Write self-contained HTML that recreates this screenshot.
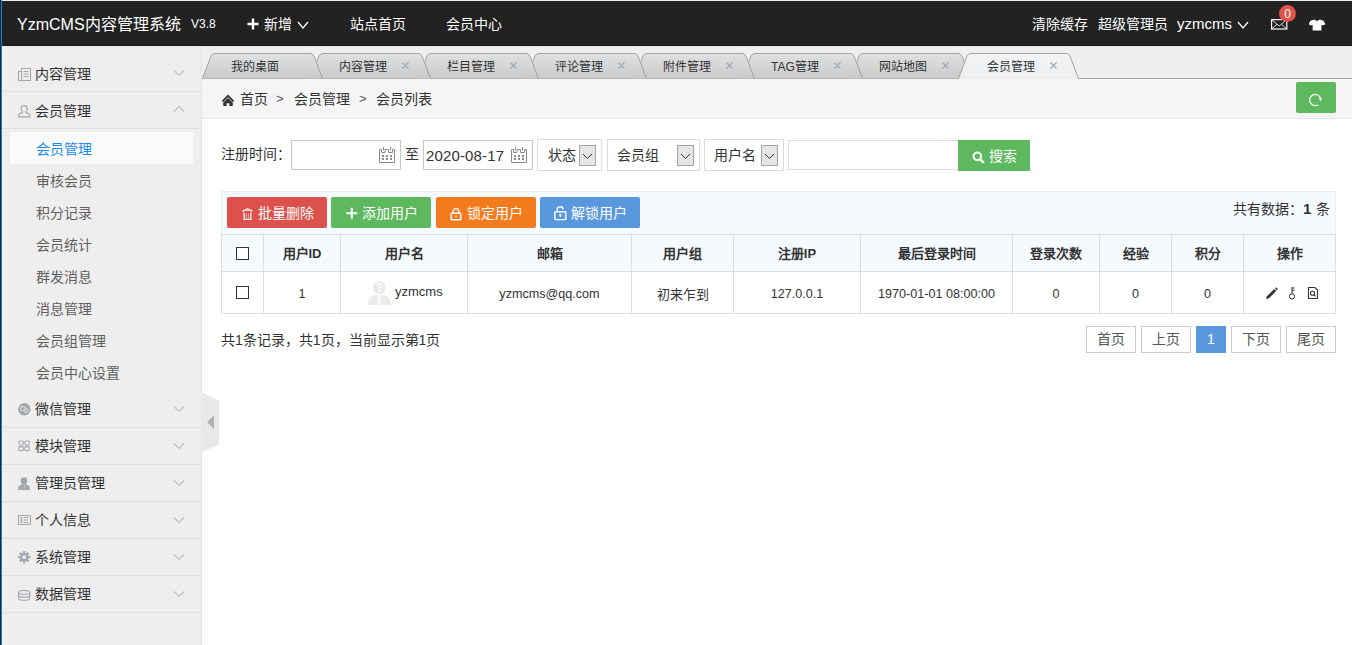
<!DOCTYPE html><html lang="zh-CN"><head><meta charset="utf-8"><title>会员列表 - YzmCMS</title><style>
*{margin:0;padding:0;box-sizing:border-box;}
html,body{width:1352px;height:645px;overflow:hidden;background:#fff;}
body{font-family:"Liberation Sans",sans-serif;font-size:14px;color:#333;position:relative;}
.a{position:absolute;white-space:nowrap;}
#frameL{left:0;top:0;width:1px;height:645px;background:#2a2523;}
#frameB{left:1px;top:0;width:1px;height:645px;background:#1a80d8;}
#header{left:2px;top:0;width:1350px;height:46px;background:#222;border-top:1px solid #eeeeee;border-bottom:1px solid #151515;}
.ht{position:absolute;color:#fff;white-space:nowrap;line-height:20px;font-size:14px;}
#sidebar{left:2px;top:46px;width:200px;height:599px;background:#eee;border-right:1px solid #e2e2e2;}
.sh{position:absolute;left:0;width:199px;height:37px;border-bottom:1px solid #e0e0e0;}
.sh .tx{position:absolute;left:33px;top:10px;font-size:14px;line-height:18px;color:#333;}
.sh .ic{position:absolute;left:16px;top:13px;}
.sh .cv{position:absolute;left:171px;top:9px;}
.si{position:absolute;left:8px;width:183px;height:32px;}
.si .tx{position:absolute;left:26px;top:8px;font-size:14px;line-height:18px;color:#5f5f5f;}
#tabbar{left:202px;top:46px;width:1150px;height:33px;background:#efeff1;}
#crumb{left:202px;top:79px;width:1150px;height:40px;background:#f5f5f5;border-bottom:1px solid #e5e5e5;}
.tab{position:absolute;top:7px;width:121px;height:26px;}
.tab svg{position:absolute;left:0;top:0;}
.tab .tx{position:absolute;left:29px;top:7px;font-size:12px;line-height:14px;color:#333;}
.tab .x{position:absolute;left:92px;top:9px;width:7px;height:7px;}
.inp{position:absolute;border:1px solid #ddd;background:#fff;height:30px;top:140px;}
.sel{position:absolute;border:1px solid #dcdcdc;background:#fff;height:32px;top:139px;}
.sel .tx{position:absolute;top:6px;font-size:14px;line-height:18px;color:#333;}
.dd{position:absolute;top:5px;width:17px;height:21px;border:1px solid #a6a6a6;background:#e5e5e5;}
.btn{position:absolute;top:197px;height:31px;width:100px;border-radius:2px;color:#fff;font-size:14px;line-height:31px;}
.btn .tx{position:absolute;top:1px;}
table{border-collapse:collapse;position:absolute;left:221px;top:234px;table-layout:fixed;}
td,th{border:1px solid #ddd;text-align:center;font-size:13px;color:#333;}
th{background:#f5faff;height:37px;font-weight:bold;padding-bottom:2px;}
td{height:42px;padding-top:2px;}
.n{font-size:12.6px;}
.pg{position:absolute;top:326px;height:27px;border:1px solid #ccc;background:#fff;font-size:14px;line-height:24px;text-align:center;color:#555;}
</style></head><body>
<div id="frameL" class="a"></div><div id="frameB" class="a"></div>
<div id="header" class="a"><div class="ht" style="left:15px;top:14px;font-size:16px;">YzmCMS内容管理系统</div><div class="ht" style="left:189px;top:13px;font-size:12px;">V3.8</div><svg class="a" style="left:245px;top:17px" width="12" height="12"><path d="M6 0.5V11.5M0.5 6H11.5" stroke="#fff" stroke-width="2.4"/></svg><div class="ht" style="left:262px;top:13px;">新增</div><svg class="a" style="left:295px;top:20px" width="12" height="8"><path d="M1 1 L6.0 7 L11 1" fill="none" stroke="#fff" stroke-width="1.2"/></svg><div class="ht" style="left:348px;top:13px;">站点首页</div><div class="ht" style="left:444px;top:13px;">会员中心</div><div class="ht" style="left:1030px;top:13px;">清除缓存</div><div class="ht" style="left:1096px;top:13px;">超级管理员</div><div class="ht" style="left:1175px;top:13px;font-size:15px;">yzmcms</div><svg class="a" style="left:1235px;top:20px" width="12" height="8"><path d="M1 1 L6.0 7 L11 1" fill="none" stroke="#fff" stroke-width="1.2"/></svg><svg class="a" style="left:1269px;top:18px" width="18" height="12"><rect x="0.6" y="0.6" width="15.2" height="9.4" fill="none" stroke="#fff" stroke-width="1.2"/><path d="M0.6 0.6L8.2 7L15.8 0.6M0.8 9.8L6 5.4M15.6 9.8L10.6 5.4" fill="none" stroke="#eee" stroke-width="0.9"/></svg><div class="a" style="left:1277px;top:4px;width:17px;height:17px;border-radius:9px;background:#e0534a;color:#fff;font-size:12px;line-height:19px;text-align:center;">0</div><svg class="a" style="left:1307px;top:18px" width="17" height="12"><path d="M5.3 0.5 Q8 3.2 10.7 0.5 L14.5 1.8 L16.5 5.2 L13.6 6.4 L12.4 5.4 V11.5 H3.6 V5.4 L2.4 6.4 L-0.5 5.2 L1.5 1.8Z" fill="#fff"/></svg></div>
<div id="sidebar" class="a"><div class="sh" style="top:9px"><div class="ic"><svg width="13" height="13"><rect x="3.5" y="0.5" width="9" height="12" fill="none" stroke="#a3a8ae"/><rect x="0.5" y="3.5" width="3" height="9" fill="none" stroke="#a3a8ae"/><path d="M5.5 3.5H10.5M5.5 6H10.5M5.5 8.5H10.5" stroke="#a3a8ae"/></svg></div><div class="tx">内容管理</div><div class="cv"><svg width="12" height="8"><path d="M1 1.5 L6 6.5 L11 1.5" fill="none" stroke="#c0c0c0" stroke-width="1.2"/></svg></div></div><div class="sh" style="top:46px"><div class="ic"><svg width="13" height="13"><path d="M4.4 6.6 Q3.1 5.3 3.1 3.4 Q3.1 0.6 6.2 0.6 Q9.3 0.6 9.3 3.4 Q9.3 5.3 8 6.6 V7.6 Q11.7 8.3 11.9 10.6 V11.9 H0.5 V10.6 Q0.7 8.3 4.4 7.6Z" fill="none" stroke="#a3a8ae" stroke-width="1.1"/></svg></div><div class="tx">会员管理</div><div class="cv" style="top:8px"><svg width="12" height="8"><path d="M1 6.5 L6 1.5 L11 6.5" fill="none" stroke="#c0c0c0" stroke-width="1.2"/></svg></div></div><div class="si" style="top:86px;background:#fafafa"><div class="tx" style="color:#1a8ae6">会员管理</div></div><div class="si" style="top:118px"><div class="tx">审核会员</div></div><div class="si" style="top:150px"><div class="tx">积分记录</div></div><div class="si" style="top:182px"><div class="tx">会员统计</div></div><div class="si" style="top:214px"><div class="tx">群发消息</div></div><div class="si" style="top:246px"><div class="tx">消息管理</div></div><div class="si" style="top:278px"><div class="tx">会员组管理</div></div><div class="si" style="top:310px"><div class="tx">会员中心设置</div></div><div class="sh" style="top:345px"><div class="ic" style="top:12px"><svg width="13" height="13"><circle cx="6.3" cy="6.3" r="6.2" fill="#a3a8ae"/><ellipse cx="5" cy="5.6" rx="2.6" ry="2.1" fill="none" stroke="#eee" stroke-width="0.9"/><ellipse cx="8.2" cy="7.6" rx="2.1" ry="1.7" fill="#a3a8ae" stroke="#eee" stroke-width="0.9"/></svg></div><div class="tx" style="top:9px">微信管理</div><div class="cv" style="top:9px"><svg width="12" height="8"><path d="M1 1.5 L6 6.5 L11 1.5" fill="none" stroke="#c0c0c0" stroke-width="1.2"/></svg></div></div><div class="sh" style="top:382px"><div class="ic" style="top:12px"><svg width="13" height="13"><g fill="none" stroke="#a3a8ae" stroke-width="1.1"><rect x="0.8" y="1" width="4.6" height="4" rx="1.2"/><rect x="6.8" y="1" width="4.6" height="4" rx="1.2"/><rect x="0.8" y="6.6" width="4.6" height="4" rx="1.2"/><rect x="6.8" y="6.6" width="4.6" height="4" rx="1.2"/></g></svg></div><div class="tx" style="top:9px">模块管理</div><div class="cv" style="top:9px"><svg width="12" height="8"><path d="M1 1.5 L6 6.5 L11 1.5" fill="none" stroke="#c0c0c0" stroke-width="1.2"/></svg></div></div><div class="sh" style="top:419px"><div class="ic" style="top:12px"><svg width="13" height="14"><path d="M6.5 0.3 Q9.3 0.3 9.3 3.6 Q9.3 6 7.9 7 V7.6 Q11.8 8.2 11.8 11 V13 H0.2 V11 Q0.2 8.2 4.1 7.6 V7 Q2.7 6 2.7 3.6 Q2.7 0.3 6.5 0.3Z" fill="#a3a8ae"/><path d="M6 8.6 H7 V11.6 H6Z" fill="#eee" fill-opacity="0.5"/></svg></div><div class="tx" style="top:9px">管理员管理</div><div class="cv" style="top:9px"><svg width="12" height="8"><path d="M1 1.5 L6 6.5 L11 1.5" fill="none" stroke="#c0c0c0" stroke-width="1.2"/></svg></div></div><div class="sh" style="top:456px"><div class="ic" style="top:12px"><svg width="13" height="12"><rect x="0.5" y="0.5" width="12" height="9" fill="none" stroke="#a3a8ae"/><circle cx="3.3" cy="3" r="0.9" fill="#a3a8ae"/><rect x="2.4" y="4.2" width="1.8" height="3.6" fill="#a3a8ae"/><path d="M5.5 2.5H10.5M5.5 5H10.5M5.5 7.5H10.5" stroke="#a3a8ae"/></svg></div><div class="tx" style="top:9px">个人信息</div><div class="cv" style="top:9px"><svg width="12" height="8"><path d="M1 1.5 L6 6.5 L11 1.5" fill="none" stroke="#c0c0c0" stroke-width="1.2"/></svg></div></div><div class="sh" style="top:493px"><div class="ic" style="top:12px"><svg width="13" height="13"><g fill="#a3a8ae"><circle cx="6.2" cy="6.2" r="4.2"/><rect x="5.1" y="0" width="2.2" height="12.4"/><rect x="0" y="5.1" width="12.4" height="2.2"/><rect x="5.1" y="0" width="2.2" height="12.4" transform="rotate(45 6.2 6.2)"/><rect x="5.1" y="0" width="2.2" height="12.4" transform="rotate(-45 6.2 6.2)"/></g><circle cx="6.2" cy="6.2" r="1.9" fill="#eee"/></svg></div><div class="tx" style="top:9px">系统管理</div><div class="cv" style="top:9px"><svg width="12" height="8"><path d="M1 1.5 L6 6.5 L11 1.5" fill="none" stroke="#c0c0c0" stroke-width="1.2"/></svg></div></div><div class="sh" style="top:530px"><div class="ic" style="top:12px"><svg width="13" height="11"><g fill="none" stroke="#a3a8ae" stroke-width="1.1"><ellipse cx="6.2" cy="2.4" rx="5.6" ry="1.9"/><path d="M0.6 2.4 V8 Q0.6 10.3 6.2 10.3 Q11.8 10.3 11.8 8 V2.4 M0.6 5.3 Q0.6 7.3 6.2 7.3 Q11.8 7.3 11.8 5.3"/></g></svg></div><div class="tx" style="top:9px">数据管理</div><div class="cv" style="top:9px"><svg width="12" height="8"><path d="M1 1.5 L6 6.5 L11 1.5" fill="none" stroke="#c0c0c0" stroke-width="1.2"/></svg></div></div></div>
<svg class="a" style="left:201px;top:392px" width="18" height="61"><path d="M0 0 L18 8.5 L18 52.5 L0 60.5Z" fill="#e8e8e8"/><path d="M6 30 L13 23.5 L13 37Z" fill="#b0b0b0"/></svg>
<div id="tabbar" class="a"><div class="a" style="left:0;top:32px;width:1150px;height:1px;background:#a2a2a2"></div><div class="tab" style="left:648px"><svg width="121" height="26"><defs><linearGradient id="gi" x1="0" y1="0" x2="0" y2="1"><stop offset="0" stop-color="#e3e4e4"/><stop offset="0.12" stop-color="#dddede"/><stop offset="1" stop-color="#cacacc"/></linearGradient></defs><path d="M0.5 25.5 L9 3 Q10 0.5 13 0.5 L108 0.5 Q111 0.5 112 3 L120.5 25.5" fill="url(#gi)" stroke="#a2a2a2" stroke-width="1"/></svg><div class="tx">网站地图</div><svg class="x" width="7" height="7"><path d="M0.5 0.5L6.5 6.5M6.5 0.5L0.5 6.5" stroke="#a4abb3" stroke-width="1.3"/></svg></div><div class="tab" style="left:540px"><svg width="121" height="26"><defs><linearGradient id="gi" x1="0" y1="0" x2="0" y2="1"><stop offset="0" stop-color="#e3e4e4"/><stop offset="0.12" stop-color="#dddede"/><stop offset="1" stop-color="#cacacc"/></linearGradient></defs><path d="M0.5 25.5 L9 3 Q10 0.5 13 0.5 L108 0.5 Q111 0.5 112 3 L120.5 25.5" fill="url(#gi)" stroke="#a2a2a2" stroke-width="1"/></svg><div class="tx">TAG管理</div><svg class="x" width="7" height="7"><path d="M0.5 0.5L6.5 6.5M6.5 0.5L0.5 6.5" stroke="#a4abb3" stroke-width="1.3"/></svg></div><div class="tab" style="left:432px"><svg width="121" height="26"><defs><linearGradient id="gi" x1="0" y1="0" x2="0" y2="1"><stop offset="0" stop-color="#e3e4e4"/><stop offset="0.12" stop-color="#dddede"/><stop offset="1" stop-color="#cacacc"/></linearGradient></defs><path d="M0.5 25.5 L9 3 Q10 0.5 13 0.5 L108 0.5 Q111 0.5 112 3 L120.5 25.5" fill="url(#gi)" stroke="#a2a2a2" stroke-width="1"/></svg><div class="tx">附件管理</div><svg class="x" width="7" height="7"><path d="M0.5 0.5L6.5 6.5M6.5 0.5L0.5 6.5" stroke="#a4abb3" stroke-width="1.3"/></svg></div><div class="tab" style="left:324px"><svg width="121" height="26"><defs><linearGradient id="gi" x1="0" y1="0" x2="0" y2="1"><stop offset="0" stop-color="#e3e4e4"/><stop offset="0.12" stop-color="#dddede"/><stop offset="1" stop-color="#cacacc"/></linearGradient></defs><path d="M0.5 25.5 L9 3 Q10 0.5 13 0.5 L108 0.5 Q111 0.5 112 3 L120.5 25.5" fill="url(#gi)" stroke="#a2a2a2" stroke-width="1"/></svg><div class="tx">评论管理</div><svg class="x" width="7" height="7"><path d="M0.5 0.5L6.5 6.5M6.5 0.5L0.5 6.5" stroke="#a4abb3" stroke-width="1.3"/></svg></div><div class="tab" style="left:216px"><svg width="121" height="26"><defs><linearGradient id="gi" x1="0" y1="0" x2="0" y2="1"><stop offset="0" stop-color="#e3e4e4"/><stop offset="0.12" stop-color="#dddede"/><stop offset="1" stop-color="#cacacc"/></linearGradient></defs><path d="M0.5 25.5 L9 3 Q10 0.5 13 0.5 L108 0.5 Q111 0.5 112 3 L120.5 25.5" fill="url(#gi)" stroke="#a2a2a2" stroke-width="1"/></svg><div class="tx">栏目管理</div><svg class="x" width="7" height="7"><path d="M0.5 0.5L6.5 6.5M6.5 0.5L0.5 6.5" stroke="#a4abb3" stroke-width="1.3"/></svg></div><div class="tab" style="left:108px"><svg width="121" height="26"><defs><linearGradient id="gi" x1="0" y1="0" x2="0" y2="1"><stop offset="0" stop-color="#e3e4e4"/><stop offset="0.12" stop-color="#dddede"/><stop offset="1" stop-color="#cacacc"/></linearGradient></defs><path d="M0.5 25.5 L9 3 Q10 0.5 13 0.5 L108 0.5 Q111 0.5 112 3 L120.5 25.5" fill="url(#gi)" stroke="#a2a2a2" stroke-width="1"/></svg><div class="tx">内容管理</div><svg class="x" width="7" height="7"><path d="M0.5 0.5L6.5 6.5M6.5 0.5L0.5 6.5" stroke="#a4abb3" stroke-width="1.3"/></svg></div><div class="tab" style="left:0px"><svg width="121" height="26"><defs><linearGradient id="gi" x1="0" y1="0" x2="0" y2="1"><stop offset="0" stop-color="#e3e4e4"/><stop offset="0.12" stop-color="#dddede"/><stop offset="1" stop-color="#cacacc"/></linearGradient></defs><path d="M0.5 25.5 L9 3 Q10 0.5 13 0.5 L108 0.5 Q111 0.5 112 3 L120.5 25.5" fill="url(#gi)" stroke="#a2a2a2" stroke-width="1"/></svg><div class="tx">我的桌面</div></div><div class="tab" style="left:756px;height:27px"><svg width="121" height="26"><defs><linearGradient id="ga" x1="0" y1="0" x2="0" y2="1"><stop offset="0" stop-color="#f3f4f5"/><stop offset="1" stop-color="#eceeef"/></linearGradient></defs><path d="M0.5 25.5 L9 3 Q10 0.5 13 0.5 L108 0.5 Q111 0.5 112 3 L120.5 25.5" fill="url(#ga)" stroke="#a2a2a2" stroke-width="1"/></svg><div class="a" style="left:1px;top:25px;width:119px;height:1px;background:#eceeef"></div><div class="tx">会员管理</div><svg class="x" width="7" height="7"><path d="M0.5 0.5L6.5 6.5M6.5 0.5L0.5 6.5" stroke="#a4abb3" stroke-width="1.3"/></svg></div></div>
<div id="crumb" class="a"><svg class="a" style="left:19px;top:15px" width="15" height="13"><path d="M1.4 7.4 L7 1.8 L12.6 7.4" fill="none" stroke="#333" stroke-width="1.8"/><path d="M2.2 8.6 L7 4.1 L11.8 8.6 V11.6 Q11.8 12 11.4 12 H8.4 V9.2 H5.6 V12 H2.6 Q2.2 12 2.2 11.6Z" fill="#333"/></svg><div class="a" style="left:38px;top:11px;font-size:14px;line-height:18px;">首页</div><div class="a" style="left:74px;top:11px;font-size:13px;line-height:18px;color:#555">&gt;</div><div class="a" style="left:92px;top:11px;font-size:14px;line-height:18px;">会员管理</div><div class="a" style="left:157px;top:11px;font-size:13px;line-height:18px;color:#555">&gt;</div><div class="a" style="left:174px;top:11px;font-size:14px;line-height:18px;">会员列表</div><div class="a" style="left:1094px;top:3px;width:40px;height:31px;border-radius:2px;background:#5eb95e;"><svg style="position:absolute;left:13px;top:11px" width="14" height="14"><path d="M9.4 11.7 A5.6 5.6 0 1 1 11.6 5.4" fill="none" stroke="#fff" stroke-width="1.2"/><path d="M9.6 5.6 L13.2 5 L11.6 8.2Z" fill="#fff"/></svg></div></div>
<div class="a" style="left:221px;top:145px;font-size:14px;line-height:18px;">注册时间：</div><div class="inp" style="left:291px;width:110px;border-color:#c6c6c6"></div><svg class="a" style="left:379px;top:147px" width="16" height="16"><path d="M0.5 2.5 H2.5 V5.5 H6 V2.5 H9.5 V5.5 H13.5 V2.5 H15.5 V15.5 H0.5Z" fill="none" stroke="#8a8a8a" stroke-width="1"/><path d="M4.5 0 V3.5 M11.5 0 V3.5" stroke="#8a8a8a" stroke-width="1"/><g fill="#8a8a8a"><rect x="3" y="8" width="2" height="2"/><rect x="7" y="8" width="2" height="2"/><rect x="11" y="8" width="2" height="2"/><rect x="3" y="11" width="2" height="2"/><rect x="7" y="11" width="2" height="2"/><rect x="11" y="11" width="2" height="2"/></g></svg><div class="a" style="left:405px;top:145px;font-size:14px;line-height:18px;">至</div><div class="inp" style="left:423px;width:110px;border-color:#c6c6c6"></div><div class="a" style="left:426px;top:147px;font-size:15px;line-height:18px;letter-spacing:0.15px">2020-08-17</div><svg class="a" style="left:511px;top:147px" width="16" height="16"><path d="M0.5 2.5 H2.5 V5.5 H6 V2.5 H9.5 V5.5 H13.5 V2.5 H15.5 V15.5 H0.5Z" fill="none" stroke="#8a8a8a" stroke-width="1"/><path d="M4.5 0 V3.5 M11.5 0 V3.5" stroke="#8a8a8a" stroke-width="1"/><g fill="#8a8a8a"><rect x="3" y="8" width="2" height="2"/><rect x="7" y="8" width="2" height="2"/><rect x="11" y="8" width="2" height="2"/><rect x="3" y="11" width="2" height="2"/><rect x="7" y="11" width="2" height="2"/><rect x="11" y="11" width="2" height="2"/></g></svg><div class="sel" style="left:537px;width:65px"><div class="tx" style="left:10px">状态</div><div class="dd" style="left:41px"><svg style="position:absolute;left:2px;top:7px" width="11" height="7"><path d="M1 1 L5.5 5.5 L10 1" fill="none" stroke="#333" stroke-width="1"/></svg></div></div><div class="sel" style="left:607px;width:93px"><div class="tx" style="left:9px">会员组</div><div class="dd" style="left:69px"><svg style="position:absolute;left:2px;top:7px" width="11" height="7"><path d="M1 1 L5.5 5.5 L10 1" fill="none" stroke="#333" stroke-width="1"/></svg></div></div><div class="sel" style="left:704px;width:80px"><div class="tx" style="left:9px">用户名</div><div class="dd" style="left:56px"><svg style="position:absolute;left:2px;top:7px" width="11" height="7"><path d="M1 1 L5.5 5.5 L10 1" fill="none" stroke="#333" stroke-width="1"/></svg></div></div><div class="inp" style="left:788px;width:171px"></div><div class="a" style="left:958px;top:140px;width:72px;height:31px;background:#5eb95e;"><svg style="position:absolute;left:14px;top:11px" width="13" height="13"><circle cx="5.3" cy="5.3" r="3.8" fill="none" stroke="#fff" stroke-width="2"/><path d="M8 8 L11.8 11.8" stroke="#fff" stroke-width="2.4"/></svg><div class="a" style="left:31px;top:7px;color:#fff;font-size:14px;line-height:18px">搜索</div></div>
<div class="a" style="left:221px;top:191px;width:1115px;height:44px;background:#f5fafe;border:1px solid #e8eef3;border-bottom:none"></div><div class="btn" style="left:227px;background:#dd514c"><svg class="a" style="left:15px;top:11px" width="11" height="13"><path d="M1 3.8 Q1 2.2 3 2.2 H8 Q10 2.2 10 3.8" fill="none" stroke="#fff" stroke-width="1.3"/><path d="M4 2 Q4 0.7 5.5 0.7 Q7 0.7 7 2" fill="none" stroke="#fff" stroke-width="1.1"/><path d="M2.2 4.5 V11.3 H8.8 V4.5" fill="none" stroke="#fff" stroke-width="1.3"/><path d="M4.5 5.5V10.5M6.5 5.5V10.5" stroke="#fff" stroke-opacity="0.55" stroke-width="0.8"/></svg><div class="tx" style="left:31px">批量删除</div></div><div class="btn" style="left:331px;background:#5eb95e"><svg class="a" style="left:15px;top:10px" width="12" height="12"><path d="M5.8 0.8V11.8M0.3 6.3H11.3" stroke="#fff" stroke-width="2.1"/></svg><div class="tx" style="left:31px">添加用户</div></div><div class="btn" style="left:436px;background:#f37b1d"><svg class="a" style="left:14px;top:10px" width="12" height="14"><path d="M3.2 6V4.4 A2.8 2.8 0 0 1 8.8 4.4V6" fill="none" stroke="#fff" stroke-width="1.3"/><rect x="1.2" y="6.2" width="9.6" height="6.6" rx="0.8" fill="none" stroke="#fff" stroke-width="1.4"/><path d="M6 8.4V10.2" stroke="#fff" stroke-width="1.2"/></svg><div class="tx" style="left:31px">锁定用户</div></div><div class="btn" style="left:540px;background:#5a98de"><svg class="a" style="left:14px;top:9px" width="13" height="15"><path d="M3.2 6.2V4.2 A3 3 0 0 1 9.2 3.4" fill="none" stroke="#fff" stroke-width="1.3"/><rect x="0.8" y="5.8" width="11" height="7.8" rx="0.8" fill="none" stroke="#fff" stroke-width="1.4"/><circle cx="6.3" cy="8.8" r="1.1" fill="#fff"/><path d="M6.3 9V11" stroke="#fff" stroke-width="1.3"/></svg><div class="tx" style="left:31px">解锁用户</div></div><div class="a" style="left:1233px;top:200px;font-size:14px;line-height:18px;">共有数据：<b style="font-size:15px">1</b>&nbsp;<span style="margin-left:1px">条</span></div>
<table><colgroup><col style="width:42px"><col style="width:77px"><col style="width:127px"><col style="width:164px"><col style="width:102px"><col style="width:127px"><col style="width:152px"><col style="width:87px"><col style="width:72px"><col style="width:72px"><col style="width:92px"></colgroup><tr><th><span style="display:inline-block;width:13px;height:13px;border:1px solid #333;vertical-align:middle;background:#fff"></span></th><th>用户ID</th><th>用户名</th><th>邮箱</th><th>用户组</th><th>注册IP</th><th>最后登录时间</th><th>登录次数</th><th>经验</th><th>积分</th><th>操作</th></tr><tr><td><span style="display:inline-block;width:13px;height:13px;border:1px solid #333;vertical-align:middle;background:#fff;position:relative;top:-2px"></span></td><td><span class=n>1</span></td><td></td><td><span class=n>yzmcms@qq.com</span></td><td>初来乍到</td><td><span class=n>127.0.0.1</span></td><td><span class=n>1970-01-01 08:00:00</span></td><td><span class=n>0</span></td><td><span class=n>0</span></td><td><span class=n>0</span></td><td></td></tr></table>
<svg class="a" style="left:367px;top:280px" width="26" height="26"><circle cx="12.4" cy="7.6" r="6.4" fill="#ebebeb"/><path d="M1 25 Q1 17 6 15.5 Q9 14.7 12.4 14.7 Q15.8 14.7 18.8 15.5 Q24 17 24 25Z" fill="#ebebeb"/><path d="M10.3 6 Q10.3 4 12.4 4 Q14.5 4 14.5 6 Q14.5 7.3 12.4 8.3 V9.6" stroke="#fff" fill="none" stroke-width="1.3"/><rect x="11.7" y="10.6" width="1.4" height="1.4" fill="#fff"/><path d="M11.4 15.2 H13.4 V25 H11.4Z" fill="#fff"/></svg>
<div class="a" style="left:395px;top:284px;font-size:13px;line-height:16px;color:#333">yzmcms</div>
<svg class="a" style="left:1264px;top:286px" width="56" height="15"><path d="M2 13.2 L3 10.2 L10.2 3 L12.2 5 L5 12.2Z" fill="#333"/><path d="M10.9 2.3 L12 1.2 L14 3.2 L12.9 4.3Z" fill="#333"/><circle cx="28" cy="10.4" r="2.6" fill="none" stroke="#333" stroke-width="1"/><path d="M28 7.8 V1 M28 2H30.5 M28 4.3H30.5" stroke="#333" stroke-width="1"/><path d="M44.5 1.5 H51 L53.5 4 V12.5 H44.5Z" fill="none" stroke="#333" stroke-width="1.1"/><circle cx="48.5" cy="7.3" r="2" fill="none" stroke="#333" stroke-width="1.1"/><path d="M50 8.8 L51.6 10.4" stroke="#333" stroke-width="1.1"/></svg>
<div class="a" style="left:221px;top:331px;font-size:14px;line-height:18px;">共1条记录，共1页，当前显示第1页</div><div class="pg" style="left:1086px;width:50px;">首页</div><div class="pg" style="left:1141px;width:50px;">上页</div><div class="pg" style="left:1196px;width:30px;background:#5a98de;border-color:#5a98de;color:#fff;">1</div><div class="pg" style="left:1231px;width:50px;">下页</div><div class="pg" style="left:1286px;width:50px;">尾页</div>
</body></html>
